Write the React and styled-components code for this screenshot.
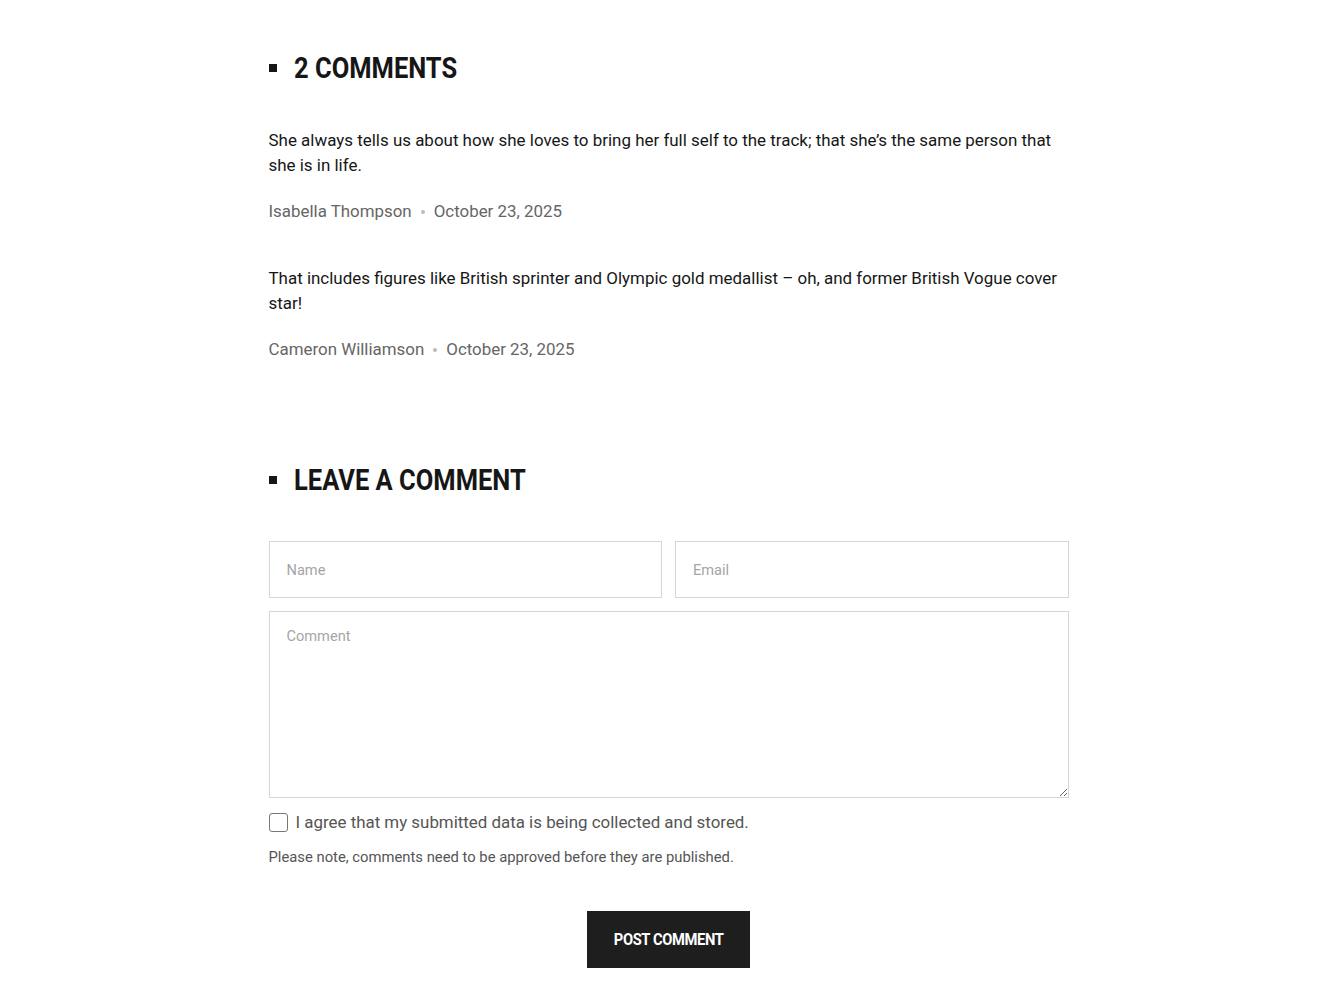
import styled, { createGlobalStyle } from "styled-components";

const GlobalStyle = createGlobalStyle`
  body {
    margin: 0;
    background: #fff;
    font-family: Roboto, "Liberation Sans", sans-serif;
  }
`;

const Page = styled.div`
  max-width: 800px;
  margin: 0 auto;
  padding: 48px 0 34px;
`;

const Section = styled.section`
  margin-bottom: ${(p) => p.$gap || 0}px;
`;

const Heading = styled.h2`
  display: flex;
  align-items: center;
  gap: 17px;
  margin: 0;
  font-size: 30px;
  font-weight: 700;
  line-height: 40px;
  color: #161616;
  text-transform: uppercase;
  white-space: nowrap;

  &::before {
    content: "";
    flex: none;
    width: 8px;
    height: 8px;
    background: #161616;
  }
`;

/* condensed look: no condensed family installed, so squeeze the label */
const Squeeze = styled.span`
  display: inline-block;
  transform: scaleX(${(p) => p.$x || 0.85});
  transform-origin: left center;
`;

const CommentList = styled.div`
  display: flex;
  flex-direction: column;
  gap: 42px;
  margin-top: 40px;
`;

const Comment = styled.article``;

const Body = styled.p`
  margin: 0 0 21px;
  font-size: 16.95px;
  line-height: 25px;
  color: #161616;
`;

const Meta = styled.div`
  display: flex;
  align-items: center;
  gap: 9px;
  font-size: 16.9px;
  line-height: 25px;
  color: #666;
`;

const Dot = styled.span`
  width: 4px;
  height: 4px;
  border-radius: 50%;
  background: #bbb;
`;

const Form = styled.form`
  display: grid;
  grid-template-columns: 1fr 1fr;
  gap: 13px;
  margin-top: 41px;
`;

const Field = styled.input`
  height: 57px;
  box-sizing: border-box;
  border: 1px solid #d6d6d6;
  padding: 0 17px;
  font-family: inherit;
  font-size: 14.6px;
  color: #333;
  outline: none;

  &::placeholder {
    color: #a5a5a5;
  }
`;

const Area = styled.textarea`
  grid-column: 1 / -1;
  height: 187px;
  box-sizing: border-box;
  border: 1px solid #d6d6d6;
  padding: 15px 17px;
  font-family: inherit;
  font-size: 14.6px;
  color: #333;
  outline: none;
  resize: vertical;

  &::placeholder {
    color: #a5a5a5;
  }
`;

const Agree = styled.label`
  grid-column: 1 / -1;
  display: flex;
  align-items: center;
  gap: 8px;
  margin-top: 1px;
  font-size: 16.9px;
  color: #555;
`;

const Box = styled.input`
  appearance: none;
  flex: none;
  width: 19px;
  height: 19px;
  margin: 0;
  border: 1px solid #777;
  border-radius: 3px;
  background: #fff;
`;

const Note = styled.p`
  grid-column: 1 / -1;
  margin: 3px 0 0;
  font-size: 14.8px;
  color: #555;
`;

const Actions = styled.div`
  grid-column: 1 / -1;
  display: flex;
  justify-content: center;
  margin-top: 32px;
`;

const Button = styled.button`
  display: flex;
  align-items: center;
  justify-content: center;
  width: 163px;
  height: 57px;
  padding: 0;
  border: none;
  background: #1e1e1e;
  color: #fff;
  font-family: inherit;
  font-size: 16px;
  font-weight: 700;
  letter-spacing: -0.4px;
  text-transform: uppercase;
  cursor: pointer;

  ${Squeeze} {
    transform-origin: center;
  }
`;

const comments = [
  {
    text: "She always tells us about how she loves to bring her full self to the track; that she’s the same person that she is in life.",
    author: "Isabella Thompson",
    date: "October 23, 2025",
  },
  {
    text: "That includes figures like British sprinter and Olympic gold medallist – oh, and former British Vogue cover star!",
    author: "Cameron Williamson",
    date: "October 23, 2025",
  },
];

export default function App() {
  return (
    <>
      <GlobalStyle />
      <Page>
        <Section $gap={98}>
          <Heading>
            <Squeeze>2 Comments</Squeeze>
          </Heading>
          <CommentList>
            {comments.map((c) => (
              <Comment key={c.author}>
                <Body>{c.text}</Body>
                <Meta>
                  <span>{c.author}</span>
                  <Dot />
                  <span>{c.date}</span>
                </Meta>
              </Comment>
            ))}
          </CommentList>
        </Section>
        <Section>
          <Heading>
            <Squeeze>Leave a Comment</Squeeze>
          </Heading>
          <Form onSubmit={(e) => e.preventDefault()}>
            <Field type="text" placeholder="Name" />
            <Field type="email" placeholder="Email" />
            <Area placeholder="Comment" />
            <Agree>
              <Box type="checkbox" />
              I agree that my submitted data is being collected and stored.
            </Agree>
            <Note>Please note, comments need to be approved before they are published.</Note>
            <Actions>
              <Button type="submit">
                <Squeeze $x={0.92}>Post Comment</Squeeze>
              </Button>
            </Actions>
          </Form>
        </Section>
      </Page>
    </>
  );
}
